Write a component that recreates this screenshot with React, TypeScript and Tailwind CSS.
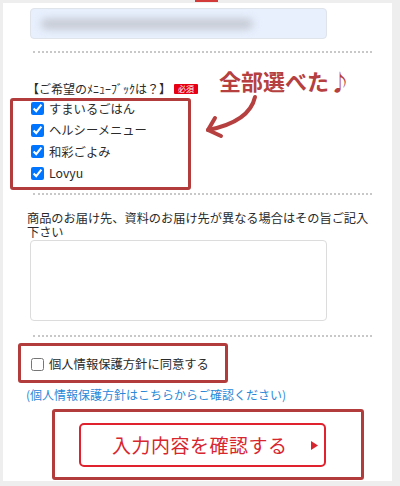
import React from "react";

const jp = { fontFamily: '"Noto Sans CJK JP", "Noto Sans", sans-serif' };

function Dotted({ mt }: { mt: string }) {
  return <div className={`${mt} ml-[30px] w-[339px] border-t-2 border-dotted border-[#c8c8c8]`} />;
}

function Check({ checked, label }: { checked: boolean; label: string }) {
  return (
    <label className="flex items-center h-[21.5px] pl-[28px]">
      <input
        type="checkbox"
        defaultChecked={checked}
        className="m-0 w-[13px] h-[13px] shrink-0"
      />
      <span className="ml-[5px] text-[12.3px] leading-[16px] text-[#2a2a2a]">{label}</span>
    </label>
  );
}

export default function App() {
  return (
    <div className="w-[400px] h-[486px] bg-[#eeeeee] pt-[3px] pl-[3px] relative overflow-hidden" style={jp}>
      <div className="absolute left-[195px] top-0 w-[23px] h-[2px] bg-[#d33a3a]" />
      <div className="relative w-[389px] h-[478px] bg-white flex flex-col">
        {/* autofilled input */}
        <div className="mt-[5px] ml-[27px] w-[297px] h-[31px] rounded-[4px] border border-[#dfe3ea] bg-[#e8f0fe] flex items-center pl-[10px] overflow-hidden">
          <div className="w-[212px] h-[10px] rounded-full bg-[#b2b5bc] blur-[4px] opacity-70" />
        </div>
        <Dotted mt="mt-[12px]" />

        <div className="mt-[28px] ml-[24px] flex items-center h-[16px]">
          <span className="text-[12px] leading-[16px] text-[#2a2a2a]">【ご希望のﾒﾆｭｰﾌﾞｯｸは？】</span>
          <span className="ml-[3px] bg-[#e60012] text-white text-[8px] leading-[10px] px-[4px] rounded-[1px]">必須</span>
        </div>

        <div className="mt-[1px] flex flex-col">
          <Check checked label="すまいるごはん" />
          <Check checked label="ヘルシーメニュー" />
          <Check checked label="和彩ごよみ" />
          <Check checked label="Lovyu" />
        </div>

        <Dotted mt="mt-[9px]" />

        <div className="mt-[16px] ml-[24px] w-[348px] text-[12.2px] leading-[14px] text-[#2a2a2a]">
          商品のお届け先、資料のお届け先が異なる場合はその旨ご記入下さい
        </div>
        <textarea className="mt-[1px] ml-[27px] w-[297px] h-[81px] rounded-[4px] border border-[#dcdcdc] bg-white resize-none outline-none" />

        <Dotted mt="mt-[14px]" />

        <label className="mt-[17px] flex items-center h-[20px] pl-[28px]">
          <input type="checkbox" className="m-0 w-[13px] h-[13px] shrink-0" />
          <span className="ml-[5px] text-[12.3px] leading-[16px] text-[#2a2a2a]">個人情報保護方針に同意する</span>
        </label>

        <div className="mt-[13px] ml-[23px] text-[12px] leading-[16px] text-[#2a88d8]">
          (個人情報保護方針はこちらからご確認ください)
        </div>

        <div className="mt-[20px] ml-[76px] w-[247px] h-[44px] rounded-[5px] border-2 border-[#e0222e] bg-white flex items-center relative">
          <span className="ml-[31px] text-[19px] leading-[24px] text-[#d8262f] tracking-[0.5px]">入力内容を確認する</span>
          <svg className="absolute left-[230px] top-[16px]" width="7" height="9" viewBox="0 0 7 9">
            <path d="M0 0 L7 4.5 L0 9 Z" fill="#d8262f" />
          </svg>
        </div>

        {/* annotations */}
        <div className="absolute left-[7px] top-[95px] w-[181px] h-[92px] border-[3px] border-[#b23b3b] rounded-[3px]" />
        <div className="absolute left-[15px] top-[340px] w-[210px] h-[40px] border-[3px] border-[#b23b3b] rounded-[3px]" />
        <div className="absolute left-[49px] top-[406px] w-[312px] h-[71px] border-[3px] border-[#b23b3b] rounded-[3px]" />
        <div className="absolute left-[216px] top-[62px] text-[22px] leading-[30px] font-semibold text-[#b5403f]">
          全部選べた♪
        </div>
        <svg className="absolute left-0 top-0" width="389" height="478" viewBox="0 0 389 478" fill="none">
          <path d="M252 94 C 248 112, 230 122, 205 127" stroke="#b5403f" strokeWidth="4" strokeLinecap="round" />
          <path d="M205 127 L 212 115 M205 127 L 218 133" stroke="#b5403f" strokeWidth="4" strokeLinecap="round" />
        </svg>
      </div>
    </div>
  );
}
